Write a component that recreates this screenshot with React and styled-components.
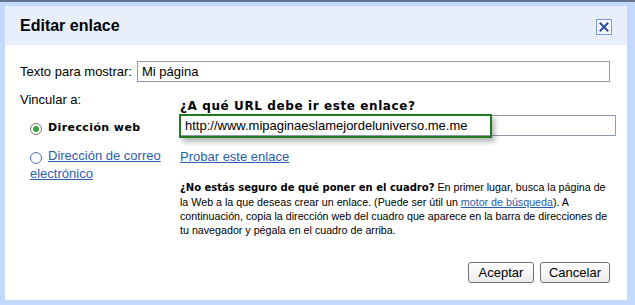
import React from 'react'
import styled, { createGlobalStyle } from 'styled-components'

const GlobalStyle = createGlobalStyle`
  html, body {
    margin: 0;
    padding: 0;
    background: #c3d9ff;
  }
  body {
    font-family: Arial, "Liberation Sans", sans-serif;
    color: #000;
  }
`

const Frame = styled.div`
  width: 635px;
  height: 305px;
  box-sizing: border-box;
  border-top: 2px solid #66738f;
  padding: 4px 8px 5px 5px;
  background: #c3d9ff;
`

const Dialog = styled.div`
  height: 100%;
  display: flex;
  flex-direction: column;
  background: #fff;
  border-radius: 2px 2px 0 0;
  overflow: hidden;
`

const TitleBar = styled.div`
  height: 39px;
  flex: none;
  display: flex;
  align-items: center;
  justify-content: space-between;
  padding: 0 15px 0 15px;
  background: #e8eefa;
`

const Title = styled.h1`
  margin: 0;
  font-size: 16px;
  font-weight: bold;
  font-family: Arial, "Liberation Sans", sans-serif;
  padding-top: 1px;
`

const CloseButton = styled.button`
  width: 16px;
  height: 16px;
  padding: 0;
  margin-top: 2px;
  border: 1px solid #7b9bd9;
  background: #f4f7fd;
  display: flex;
  align-items: center;
  justify-content: center;
`

const Body = styled.div`
  flex: 1;
  display: flex;
  flex-direction: column;
  padding: 16px 17px 17px 15px;
  font-size: 13px;
`

const TextRow = styled.div`
  display: flex;
  align-items: center;
  gap: 5px;
`

const Label = styled.label`
  font-size: 13px;
  white-space: nowrap;
`

const Input = styled.input`
  box-sizing: border-box;
  height: 21px;
  flex: 1;
  width: 100%;
  border: 1px solid #8d9aac;
  padding: 0 4px;
  font-family: Arial, "Liberation Sans", sans-serif;
  font-size: 13px;
  color: #000;
  outline: none;
`

const Columns = styled.div`
  display: grid;
  grid-template-columns: 160px 1fr;
  margin-top: 10px;
`

const LeftCol = styled.div`
  display: flex;
  flex-direction: column;
`

const RightCol = styled.div`
  display: flex;
  flex-direction: column;
  padding-top: 7px;
  padding-right: 1px;
`

const Heading = styled.div`
  font-family: Verdana, "DejaVu Sans", sans-serif;
  font-weight: bold;
  font-size: 12px;
  letter-spacing: 0.6px;
  line-height: 14px;
  margin-bottom: 2px;
`

const RadioRow = styled.div`
  padding-left: 10px;
  margin-top: ${p => p.$top}px;
  line-height: 18px;
  width: 150px;
`

const RadioDot = styled.span`
  display: inline-flex;
  vertical-align: -1px;
  width: 12px;
  height: 12px;
  margin-right: 6px;
  border-radius: 50%;
  box-sizing: border-box;
  border: 1px solid ${p => (p.$checked ? '#6f7c74' : '#5477b3')};
  background: ${p => (p.$checked ? '#fff' : '#f7f9fd')};
  align-items: center;
  justify-content: center;
  &::after {
    content: '';
    width: 6px;
    height: 6px;
    border-radius: 50%;
    background: ${p => (p.$checked ? '#3aa43f' : 'transparent')};
  }
`

const RadioBold = styled.span`
  font-family: Verdana, "DejaVu Sans", sans-serif;
  font-weight: bold;
  font-size: 11px;
  letter-spacing: 0.4px;
`

const RadioLink = styled.span`
  font-size: 13px;
  color: #2a5db0;
  text-decoration: underline;
`

const UrlBox = styled.div`
  position: relative;
  display: flex;
`

const Highlight = styled.div`
  position: absolute;
  left: -1px;
  top: -1px;
  width: 313px;
  height: 24px;
  box-sizing: border-box;
  border: 2px solid #1f7a22;
  box-shadow: 3px 4px 5px rgba(0, 0, 0, 0.28);
  pointer-events: none;
`

const Link = styled.a`
  color: #2a5db0;
  text-decoration: underline;
  font-size: ${p => p.$size || 13}px;
`

const TestLink = styled.div`
  margin-top: 13px;
  font-size: 13px;
  line-height: 16px;
`

const Help = styled.p`
  margin: 15px 0 0;
  font-size: 10.7px;
  line-height: 14px;
  width: 436px;
`

const HelpStrong = styled.strong`
  font-family: Verdana, "DejaVu Sans", sans-serif;
  font-size: 10px;
`

const Footer = styled.div`
  margin-top: auto;
  display: flex;
  justify-content: flex-end;
  gap: 6px;
`

const Button = styled.button`
  box-sizing: border-box;
  height: 21px;
  padding: 0;
  font-family: Arial, "Liberation Sans", sans-serif;
  font-size: 13px;
  color: #000;
  border: 1px solid #707070;
  border-radius: 3px;
  background: linear-gradient(#ffffff, #ececec);
  width: ${p => p.$w}px;
`

const CloseIcon = () => (
  <svg width="10" height="10" viewBox="0 0 10 10">
    <path d="M1.5 1.5 L8.5 8.5 M8.5 1.5 L1.5 8.5" stroke="#2d4f9a" strokeWidth="2" strokeLinecap="square" />
  </svg>
)

export default function App () {
  return (
    <Frame>
      <GlobalStyle />
      <Dialog>
        <TitleBar>
          <Title>Editar enlace</Title>
          <CloseButton aria-label='Cerrar'><CloseIcon /></CloseButton>
        </TitleBar>
        <Body>
          <TextRow>
            <Label>Texto para mostrar:</Label>
            <Input defaultValue='Mi página' />
          </TextRow>
          <Columns>
            <LeftCol>
              <Label>Vincular a:</Label>
              <RadioRow $top={11}>
                <RadioDot $checked />
                <RadioBold>Dirección web</RadioBold>
              </RadioRow>
              <RadioRow $top={10}>
                <RadioLink><RadioDot />Dirección de correo electrónico</RadioLink>
              </RadioRow>
            </LeftCol>
            <RightCol>
              <Heading>¿A qué URL debe ir este enlace?</Heading>
              <UrlBox>
                <Input defaultValue='http://www.mipaginaeslamejordeluniverso.me.me' />
                <Highlight />
              </UrlBox>
              <TestLink><Link>Probar este enlace</Link></TestLink>
              <Help>
                <HelpStrong>¿No estás seguro de qué poner en el cuadro?</HelpStrong> En primer lugar, busca la página de la Web a la que deseas crear un enlace. (Puede ser útil un <Link $size={10.7}>motor de búsqueda</Link>). A continuación, copia la dirección web del cuadro que aparece en la barra de direcciones de tu navegador y pégala en el cuadro de arriba.
              </Help>
            </RightCol>
          </Columns>
          <Footer>
            <Button $w={66}>Aceptar</Button>
            <Button $w={70}>Cancelar</Button>
          </Footer>
        </Body>
      </Dialog>
    </Frame>
  )
}
